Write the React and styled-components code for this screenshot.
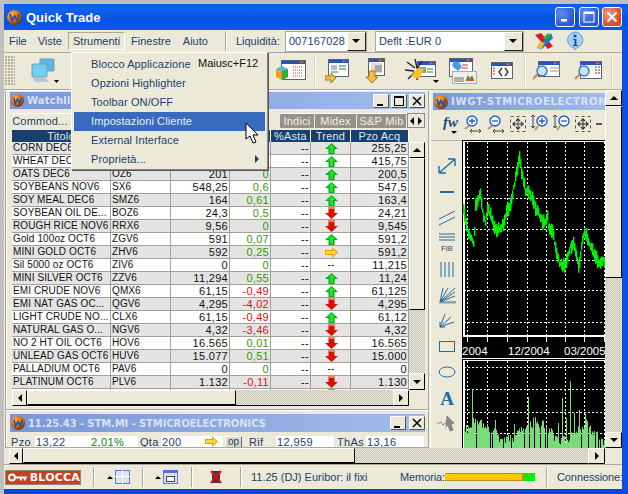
import React from "react";
import styled, { createGlobalStyle } from "styled-components";

const NAVY = "#1b3f6b";
const FACE = "#ece9d8";
const LINE = "#a3a194";
const TOOL = "#1c6ea4";

const ROWS = [
  ["CORN DEC6", "CZ6", "255,5", "0,1", "up", "255,25"],
  ["WHEAT DEC6", "WZ6", "416", "0,1", "up", "415,75"],
  ["OATS DEC6", "OZ6", "201", "0", "up", "200,5"],
  ["SOYBEANS NOV6", "SX6", "548,25", "0,6", "up", "547,5"],
  ["SOY MEAL DEC6", "SMZ6", "164", "0,61", "up", "163,4"],
  ["SOYBEAN OIL DE...", "BOZ6", "24,3", "0,5", "down", "24,21"],
  ["ROUGH RICE NOV6", "RRX6", "9,56", "0", "down", "9,545"],
  ["Gold 100oz OCT6", "ZGV6", "591", "0,07", "up", "591,2"],
  ["MINI GOLD OCT6", "ZHV6", "592", "0,25", "right", "591,2"],
  ["Sil 5000 oz OCT6", "ZIV6", "0", "0", "none", "11,215"],
  ["MINI SILVER OCT6", "ZZV6", "11,294", "0,55", "up", "11,24"],
  ["EMI CRUDE NOV6", "QMX6", "61,15", "-0,49", "up", "61,125"],
  ["EMI NAT GAS OC...", "QGV6", "4,295", "-4,02", "down", "4,295"],
  ["LIGHT CRUDE NO...", "CLX6", "61,15", "-0,49", "up", "61,12"],
  ["NATURAL GAS O...", "NGV6", "4,32", "-3,46", "down", "4,32"],
  ["NO 2 HT OIL OCT6", "HOV6", "16.565", "0,01", "down", "16.565"],
  ["UNLEAD GAS OCT6", "HUV6", "15.077", "0,51", "down", "15.000"],
  ["PALLADIUM OCT6", "PAV6", "0", "0", "none", "0"],
  ["PLATINUM OCT6", "PLV6", "1.132", "-0,11", "down", "1.130"],
  ["", "", "", "", "down", ""],
];

const MENU = [
  { label: "Blocco Applicazione", keys: "Maiusc+F12" },
  { label: "Opzioni Highlighter" },
  { label: "Toolbar ON/OFF" },
  { label: "Impostazioni Cliente", active: true },
  { label: "External Interface" },
  { label: "Proprietà...", sub: true },
];

const PRICE = [
  [463, 210], [465, 223], [467, 230], [470, 237], [473, 243], [474, 230], [475, 207], [477, 203],
  [480, 193], [482, 213], [485, 223], [487, 207], [490, 213], [493, 227], [497, 230], [500, 227],
  [503, 223], [506, 213], [509, 207], [512, 193], [515, 177], [517, 167], [519, 158], [522, 177],
  [525, 190], [528, 190], [533, 203], [538, 213], [542, 222], [547, 218], [548, 227], [552, 233],
  [555, 247], [558, 260], [562, 268], [565, 263], [567, 257], [570, 247], [573, 243], [576, 257],
  [578, 267], [581, 247], [584, 232], [588, 240], [593, 253], [598, 263], [605, 260],
];

const VOLUME_PEAKS = { 472: 59, 473: 30, 495: 28, 514: 24, 528: 51, 532: 20, 558: 25, 562: 50, 566: 30, 570: 67, 574: 35, 579: 38, 585: 34, 593: 13 };
const VOLUME_GAPS = [476, 490, 492, 503, 511, 524, 529, 534, 540, 545, 547, 581, 588, 595, 598, 600];

const priceAt = (x) => {
  for (let i = 1; i < PRICE.length; i++) {
    const [x1, y1] = PRICE[i];
    const [x0, y0] = PRICE[i - 1];
    if (x <= x1) return y0 + ((y1 - y0) * (x - x0)) / (x1 - x0);
  }
  return 260;
};

const noise = (x) => Math.abs(Math.sin(x * 12.9898) * 43758.5453) % 1;

const volumeAt = (x) => {
  if (VOLUME_PEAKS[x]) return VOLUME_PEAKS[x];
  if (VOLUME_GAPS.includes(x)) return 0;
  const wave = 12 + 9 * Math.sin((x - 464) / 9);
  return Math.max(3, wave + noise(x) * 10 - (x > 590 ? 12 : 0));
};

const GlobalStyle = createGlobalStyle`
  html, body {
    margin: 0;
    background: #c0c0c0;
    overflow: hidden;
  }
  * {
    box-sizing: border-box;
  }
`;

const Page = styled.div`
  width: 628px;
  height: 494px;
  padding: 4px 0 0 4px;
  background: #c0c0c0;
  font: 11px "Liberation Sans", Arial, sans-serif;
  color: ${NAVY};
`;

const AppWindow = styled.div`
  position: relative;
  width: 624px;
  height: 490px;
  display: flex;
  flex-direction: column;
  background: ${FACE};
  border-right: 6px solid #0c4fe0;
  border-bottom: 5px solid #0a46d8;
`;

const TitleBar = styled.div`
  height: 26px;
  margin-right: -6px;
  padding: 0 6px 0 3px;
  display: flex;
  align-items: center;
  gap: 3px;
  background: linear-gradient(180deg, #0a5be8 0%, #0f62f0 20%, #0553e0 60%, #0a58ea 100%);
`;

const AppTitle = styled.div`
  flex: 1;
  margin-left: 1px;
  color: #fff;
  font: bold 13px "Liberation Sans", Arial, sans-serif;
`;

const CaptionButton = styled.div`
  width: 20px;
  height: 20px;
  margin-left: ${(p) => p.$gap || 0}px;
  border: 1px solid #fff;
  border-radius: 3px;
  display: flex;
  align-items: center;
  justify-content: center;
  background: ${(p) =>
    p.$close
      ? "radial-gradient(circle at 30% 30%, #ee9a80, #d9492a 70%)"
      : "radial-gradient(circle at 30% 30%, #5f8bf0, #2a55d8 75%)"};
`;

const MenuBar = styled.div`
  height: 23px;
  display: flex;
  align-items: center;
  border-bottom: 1px solid #aca899;
  font-size: 11px;
`;

const MenuTitle = styled.div`
  height: 18px;
  line-height: 16px;
  padding: 0 4px;
  margin-left: ${(p) => p.$ml || 0}px;
  border: 1px solid ${(p) => (p.$open ? "#aca899" : "transparent")};
  border-right-color: ${(p) => (p.$open ? "#fff" : "transparent")};
  border-bottom-color: ${(p) => (p.$open ? "#fff" : "transparent")};
`;

const MenuDivider = styled.div`
  width: 1px;
  height: 20px;
  margin: 0 10px 0 ${(p) => p.$ml || 0}px;
  background: #aca899;
  box-shadow: 1px 0 #fff;
`;

const FieldLabel = styled.div`
  width: 43px;
  flex: none;
`;

const Combo = styled.div`
  width: ${(p) => p.$w}px;
  height: 21px;
  flex: none;
  margin-left: ${(p) => p.$ml || 0}px;
  padding-left: 3px;
  display: flex;
  align-items: center;
  justify-content: space-between;
  background: #fff;
  border: 1px solid #aca899;
  letter-spacing: 0.1px;
`;

const ComboButton = styled.div`
  width: 19px;
  height: 19px;
  display: flex;
  align-items: center;
  justify-content: center;
  background: ${FACE};
  border: 1px solid;
  border-color: #fff #222 #222 #fff;
`;

const Triangle = styled.span`
  width: 0;
  height: 0;
  display: block;
  border-style: solid;
  border-color: transparent;
  ${(p) => p.$dir === "up" && `border-width: 0 ${p.$s || 4}px ${p.$s || 4}px; border-bottom-color: #000;`}
  ${(p) => p.$dir === "down" && `border-width: ${p.$s || 4}px ${p.$s || 4}px 0; border-top-color: #000;`}
  ${(p) => p.$dir === "left" && `border-width: ${p.$s || 4}px ${p.$s || 4}px ${p.$s || 4}px 0; border-right-color: #000;`}
  ${(p) => p.$dir === "right" && `border-width: ${p.$s || 4}px 0 ${p.$s || 4}px ${p.$s || 4}px; border-left-color: #000;`}
`;

const ToolBar = styled.div`
  height: 37px;
  display: flex;
  align-items: center;
  border-bottom: 1px solid #aca899;
`;

const Gripper = styled.div`
  width: 10px;
  height: 30px;
  margin-left: 1px;
  background: radial-gradient(circle at 1px 1px, #b4b0a0 0.8px, transparent 0.8px) 0 0 / 3px 3px;
`;

const ToolSlot = styled.div`
  margin-left: ${(p) => p.$ml}px;
  display: flex;
  align-items: flex-end;
`;

const ToolDivider = styled.div`
  width: 1px;
  height: 30px;
  margin-left: ${(p) => p.$ml}px;
  background: #fff;
  box-shadow: -1px 0 #d8d4c4;
`;

const Workspace = styled.div`
  height: 374px;
  display: grid;
  grid-template-columns: 601px 17px;
  grid-template-rows: 358px 16px;
`;

const Desktop = styled.div`
  display: flex;
  overflow: hidden;
`;

const LeftColumn = styled.div`
  width: 426px;
  flex: none;
  padding-left: 1px;
`;

const ChildFrame = styled.div`
  width: 424px;
  height: ${(p) => p.$h}px;
  padding: ${(p) => p.$pt || 1}px 3px 0 4px;
  border: 1px solid #aca899;
  border-top-color: #fff;
  box-shadow: inset 1px 0 #fff;
  overflow: hidden;
`;

const ChildTitle = styled.div`
  height: ${(p) => p.$h || 17}px;
  padding-left: 1px;
  display: flex;
  align-items: center;
  gap: 3px;
  overflow: hidden;
  white-space: nowrap;
  background: linear-gradient(90deg, #7a97d8 0%, #a0bcec 100%);
`;

const ChildCaption = styled.div`
  flex: 1;
  color: #d6e2f6;
  font: bold 10px "DejaVu Sans", sans-serif;
  letter-spacing: ${(p) => p.$ls || 0}px;
`;

const ChildButton = styled.div`
  width: 16px;
  height: 14px;
  margin-left: ${(p) => p.$ml || 0}px;
  display: flex;
  align-items: center;
  justify-content: center;
  background: ${FACE};
  border: 1px solid;
  border-color: #fff #555 #555 #fff;
`;

const Tabs = styled.div`
  height: 15px;
  margin-top: 4px;
  display: flex;
  justify-content: space-between;
  align-items: stretch;
`;

const Tab = styled.div`
  width: ${(p) => p.$w}px;
  padding-top: 1px;
  margin-right: 1px;
  text-align: center;
  font-size: 11px;
  letter-spacing: 0.2px;
  line-height: 13px;
  white-space: nowrap;
  color: ${(p) => (p.$active ? NAVY : "#f0efe8")};
  background: ${(p) => (p.$active ? FACE : "#94928a")};
  border-top: 1px solid #fff;
`;

const TabGroup = styled.div`
  display: flex;
`;

const TabArrows = styled.div`
  width: 18px;
  display: flex;
  align-items: center;
  justify-content: space-around;
  background: ${FACE};
  border: 1px solid #888;
`;

const GridHead = styled.div`
  display: grid;
  grid-template-columns: 99px 60px 59px 41px 40px 40px 58px;
  width: 397px;
  height: 12px;
  margin: 2px 0 0 2px;
  background: #17406e;
`;

const HeadCell = styled.div`
  color: #dce8f4;
  text-align: center;
  line-height: 12px;
  font-size: 11px;
  border-right: 1px solid #fff;
  letter-spacing: 0.2px;
`;

const GridBody = styled.div`
  display: flex;
  height: 248px;
  margin-left: 2px;
`;

const Rows = styled.div`
  width: 397px;
  overflow: hidden;
`;

const Row = styled.div`
  display: grid;
  grid-template-columns: 99px 60px 59px 41px 40px 40px 58px;
  height: 13px;
  background: ${(p) => (p.$odd ? "#fff" : "#e4e4e4")};
  border-bottom: 1px solid ${LINE};
`;

const Cell = styled.div`
  padding: 0 ${(p) => (p.$right ? 1 : 0)}px 0 ${(p) => (p.$right ? 0 : 1)}px;
  height: 12px;
  line-height: 12px;
  font-size: ${(p) => (p.$right ? 11 : 10)}px;
  letter-spacing: ${(p) => (p.$right ? 0.3 : 0.1)}px;
  color: ${(p) => p.$color || "#111"};
  text-align: ${(p) => (p.$right ? "right" : "left")};
  white-space: nowrap;
  overflow: hidden;
  border-right: 1px solid ${LINE};
  display: ${(p) => (p.$center ? "flex" : "block")};
  align-items: center;
  justify-content: center;
`;

const VScroll = styled.div`
  width: ${(p) => p.$w || 16}px;
  display: flex;
  flex-direction: column;
  background: repeating-conic-gradient(${FACE} 0 25%, #c4c2b6 0 50%) 0 0 / 2px 2px;
`;

const ScrollButton = styled.div`
  width: ${(p) => p.$w || 16}px;
  height: ${(p) => p.$h || 16}px;
  flex: none;
  margin-top: ${(p) => (p.$end ? "auto" : 0)};
  margin-left: ${(p) => (p.$endX ? "auto" : 0)};
  display: flex;
  align-items: center;
  justify-content: center;
  background: ${FACE};
  border: 1px solid;
  border-color: #fff #000 #000 #fff;
`;

const VThumb = styled.div`
  height: ${(p) => p.$h}px;
  flex: none;
  background: ${FACE};
  border: 1px solid;
  border-color: #fff #000 #000 #fff;
`;

const HScroll = styled.div`
  height: 16px;
  margin-left: ${(p) => p.$ml || 0}px;
  width: ${(p) => p.$w}px;
  display: flex;
  background: repeating-conic-gradient(${FACE} 0 25%, #c4c2b6 0 50%) 0 0 / 2px 2px;
  border-bottom: 1px solid #000;
`;

const HThumb = styled.div`
  width: ${(p) => p.$w}px;
  flex: none;
  background: ${FACE};
  border: 1px solid;
  border-color: #fff #000 #000 #fff;
`;

const QuoteRow = styled.div`
  height: 13px;
  margin-top: 3px;
  display: flex;
  align-items: center;
  font-size: 11px;
`;

const QuoteLabel = styled.div`
  width: ${(p) => p.$w}px;
  padding-left: ${(p) => p.$pl || 0}px;
  flex: none;
  letter-spacing: 0.3px;
`;

const QuoteValue = styled.div`
  width: ${(p) => p.$w}px;
  height: 12px;
  line-height: 12px;
  padding-left: 1px;
  flex: none;
  background: #fff;
  letter-spacing: 0.4px;
  color: ${(p) => p.$color || NAVY};
`;

const OpButton = styled.div`
  width: 17px;
  height: 12px;
  margin: 0 0 0 2px;
  flex: none;
  font-size: 10px;
  line-height: 9px;
  text-align: center;
  background: #dcd9ca;
  border: 1px solid;
  border-color: #fff #666 #666 #fff;
`;

const ChartWindow = styled.div`
  flex: 1;
  min-width: 0;
  padding: 3px 0 0 2px;
  border-left: 1px solid #fff;
  display: flex;
  flex-direction: column;
`;

const ChartTools = styled.div`
  height: 24px;
  margin: 2px 0 4px;
  padding-left: 10px;
  display: flex;
  align-items: center;
  gap: 5px;
  overflow: hidden;
`;

const ToolDash = styled.div`
  width: 6px;
  height: 2px;
  flex: none;
  background: #555;
`;

const ChartBody = styled.div`
  flex: 1;
  display: flex;
  min-height: 0;
  margin-left: -2px;
`;

const DrawTools = styled.div`
  width: 31px;
  flex: none;
  padding-top: 15px;
  display: flex;
  flex-direction: column;
  align-items: center;
  gap: 5.8px;
  border-top: 1px solid #b8b6a8;
`;

const ChartCanvas = styled.svg`
  width: 143px;
  height: 308px;
  display: block;
  background: #000;
`;

const ChartLabel = styled.text`
  fill: #fff;
  font: 11.5px "Liberation Sans", Arial, sans-serif;
`;

const Corner = styled.div`
  background: ${FACE};
`;

const OuterHScroll = styled(HScroll)`
  padding-left: 5px;
  background: none;
  border: 0;
`;

const OuterTrack = styled.div`
  flex: 1;
  display: flex;
  background: repeating-conic-gradient(${FACE} 0 25%, #c4c2b6 0 50%) 0 0 / 2px 2px;
  border-bottom: 1px solid #000;
`;

const StatusBar = styled.div`
  height: 25px;
  display: flex;
  align-items: center;
  padding-left: 1px;
  border-top: 1px solid #aca899;
  font-size: 11px;
  white-space: nowrap;
`;

const LockButton = styled.div`
  width: 76px;
  height: 15px;
  padding-left: 2px;
  display: flex;
  align-items: center;
  gap: 3px;
  color: #fff;
  font: bold 11px "DejaVu Sans", sans-serif;
  letter-spacing: 0.2px;
  background: #c8401c;
  border: 1px solid #8a8878;
`;

const StatusDivider = styled.div`
  width: 1px;
  height: 20px;
  flex: none;
  margin-left: ${(p) => p.$ml}px;
  background: #aca899;
  box-shadow: 1px 0 #fff;
`;

const StatusIcon = styled.div`
  margin-left: ${(p) => p.$ml}px;
  display: flex;
  align-items: center;
  gap: 2px;
`;

const StatusText = styled.div`
  width: ${(p) => (p.$w ? `${p.$w}px` : "auto")};
  flex: none;
  margin-left: ${(p) => p.$ml}px;
  letter-spacing: ${(p) => p.$ls || 0}px;
`;

const MemoryBar = styled.div`
  width: 90px;
  height: 8px;
  flex: none;
  display: flex;
  background: #ffc800;
  box-shadow: inset 0 -1px #b89020, inset 0 1px #b89020;
`;

const MemoryFree = styled.div`
  width: ${(p) => p.$w}px;
  margin-left: auto;
  background: #00f000;
  border-left: 2px solid #b89020;
`;

const MenuPanel = styled.div`
  position: absolute;
  left: 67px;
  top: 48px;
  width: 197px;
  height: 118px;
  padding: 2px;
  background: ${FACE};
  border: 1px solid;
  border-color: #fff #888 #888 #fff;
  box-shadow: 1px 1px 0 #555;
  z-index: 5;
`;

const MenuItem = styled.div`
  position: relative;
  height: 19px;
  line-height: 19px;
  padding-left: 17px;
  font-size: 11px;
  letter-spacing: 0.1px;
  color: ${(p) => (p.$active ? "#e8eef8" : NAVY)};
  background: ${(p) => (p.$active ? "#386bc0" : "transparent")};
  display: flex;
`;

const MenuKeys = styled.div`
  position: absolute;
  left: 124px;
  top: -1px;
  color: #111;
  letter-spacing: 0;
`;

const SubArrow = styled.span`
  position: absolute;
  right: 6px;
  top: 5px;
  width: 0;
  height: 0;
  border-style: solid;
  border-width: 4px 0 4px 4px;
  border-color: transparent transparent transparent ${NAVY};
`;

const Cursor = styled.svg`
  position: absolute;
  left: 241px;
  top: 118px;
  z-index: 6;
`;

const Logo = ({ size = 14 }) => (
  <svg width={size} height={size} viewBox="0 0 14 14" style={{ flex: "none" }}>
    <defs>
      <radialGradient id="logoBall" cx="35%" cy="30%" r="75%">
        <stop offset="0" stopColor="#ffb040" />
        <stop offset="0.6" stopColor="#d86a10" />
        <stop offset="1" stopColor="#5a3010" />
      </radialGradient>
    </defs>
    <circle cx="7" cy="7" r="7" fill="url(#logoBall)" />
    <path d="M3 4l1.6 6 2.4-4.5L9.4 10 11 4" fill="none" stroke="#2050a8" strokeWidth="1.6" />
  </svg>
);

const Trend = ({ kind }) => {
  if (kind === "none") return <span>--</span>;
  if (kind === "up")
    return (
      <svg width="13" height="11" viewBox="0 0 13 11">
        <path d="M6.5 0L13 6H9.5V11H3.5V6H0z" fill="#00b010" />
        <path d="M6.5 1L3 5H5V10H8V5H10z" fill="#28e030" />
      </svg>
    );
  if (kind === "down")
    return (
      <svg width="13" height="12" viewBox="0 0 13 12">
        <path d="M3.5 0H9.5V6H13L6.5 12 0 6H3.5z" fill="#d81000" />
        <path d="M3.5 0H9.5V2H3.5z" fill="#f08060" />
      </svg>
    );
  return (
    <svg width="13" height="11" viewBox="0 0 13 11">
      <path d="M0 3H7V0L13 5.5 7 11V8H0z" fill="#e8a000" />
      <path d="M1 4H8V2L11.5 5.5 8 9V7H1z" fill="#ffd840" />
    </svg>
  );
};

// small application window, the base of most toolbar icons
const WinIcon = ({ x = 0, y = 0, w = 22, h = 17, children }) => (
  <g transform={`translate(${x} ${y})`}>
    <rect x="0.5" y="0.5" width={w} height={h} fill="#fff" stroke="#5a6470" />
    <rect x="1" y="1" width={w - 1} height="3" fill="#2850c8" />
    <rect x={w - 5} y="1.5" width="1.5" height="1.5" fill="#e8a020" />
    <rect x={w - 2.5} y="1.5" width="1.5" height="1.5" fill="#e04020" />
    {children}
  </g>
);

const SideArrow = () => <path d="M0 18h6v-3l5 5-5 5v-3H0z" fill="#f0c040" stroke="#a07820" />;
const DownArrow = () => <path d="M4 13h6v6h3l-6 6-6-6h3z" fill="#f0c040" stroke="#a07820" />;

const Magnifier = ({ x, y }) => (
  <g transform={`translate(${x} ${y})`}>
    <path d="M6 6L0 12" stroke="#c89060" strokeWidth="2.4" />
    <circle cx="9" cy="4" r="5" fill="#c8e4fa" stroke="#3878b8" strokeWidth="1.4" />
  </g>
);

const ToolbarIcon = ({ name }) => {
  switch (name) {
    case "network":
      return (
        <svg width="28" height="26" viewBox="0 0 28 26">
          <rect x="9" y="1" width="14" height="12" rx="1" fill="#58b8ee" stroke="#8098b0" />
          <rect x="1" y="6" width="15" height="13" rx="1" fill="#70d0f4" stroke="#8098b0" />
          <path d="M2 20h13l3 4H3z" fill="#c0c4d8" />
          <path d="M23 22h5l-2.5 3z" fill="#000" />
        </svg>
      );
    case "cube":
      return (
        <svg width="30" height="22" viewBox="0 0 30 22">
          <WinIcon x="5" w="24" h="19">
            <path d="M12 7h10M12 10h10M12 13h10M12 16h10" stroke="#c04040" strokeDasharray="1 1" />
          </WinIcon>
          <path d="M0 9l6-3 6 3v8l-6 3-6-3z" fill="#f0a020" />
          <path d="M6 11l6-2v8l-6 3z" fill="#30b030" />
          <path d="M0 9l6-3 6 3-6 2z" fill="#58b8e8" />
        </svg>
      );
    case "exportWin":
      return (
        <svg width="24" height="26" viewBox="0 0 24 26">
          <WinIcon x="3" y="1" w="20" h="17">
            <rect x="3" y="6" width="6" height="5" fill="#bbb" />
            <path d="M3 13h7M11 7h7M11 10h7" stroke="#188030" />
          </WinIcon>
          <SideArrow />
        </svg>
      );
    case "importWin":
      return (
        <svg width="20" height="26" viewBox="0 0 20 26">
          <WinIcon x="3" y="0" w="16" h="17">
            <rect x="3" y="5" width="11" height="10" fill="#ead8d8" />
            <rect x="7" y="7" width="7" height="7" fill="#a8a8a8" />
          </WinIcon>
          <DownArrow />
        </svg>
      );
    case "spark":
      return (
        <svg width="34" height="26" viewBox="0 0 34 26">
          <WinIcon x="12" y="3" w="18" h="15">
            <rect x="2" y="6" width="7" height="6" fill="#999" />
            <path d="M10 8h6M10 11h6" stroke="#188030" />
          </WinIcon>
          <path d="M2 4l8 6M10 1l2 9M17 3l-5 8M0 12l9 1M3 21l7-7M12 22l1-9" stroke="#222" strokeWidth="1.4" />
          <path d="M6 18l7-8 6 1-5 10z" fill="#f4c420" />
          <path d="M28 22h6l-3 3z" fill="#000" />
        </svg>
      );
    case "chartWin":
      return (
        <svg width="28" height="26" viewBox="0 0 28 26">
          <WinIcon x="0" y="0" w="23" h="18">
            <path d="M3 7h6M13 7h6M13 10h6" stroke="#c04040" />
          </WinIcon>
          <path d="M4 3l6 1 3 5-4 4-5-4z" fill="#48a0e0" />
          <rect x="3.5" y="13.5" width="24" height="12" fill="#eee" stroke="#aaa" />
          <rect x="5" y="19" width="10" height="5" fill="#b0b0b0" />
          <path d="M17 23l2-5 2 3 2-3 2 5" fill="#e05020" stroke="#30a040" />
        </svg>
      );
    case "codeWin":
      return (
        <svg width="22" height="18" viewBox="0 0 22 18">
          <WinIcon w="21" h="16">
            <path d="M2 6h2M2 9h2M2 12h2" stroke="#c08020" strokeWidth="1.4" />
            <path d="M11 6l-3 4 3 4M14 6l3 4-3 4" fill="none" stroke="#333" strokeWidth="1.4" />
          </WinIcon>
        </svg>
      );
    case "searchWin":
      return (
        <svg width="27" height="21" viewBox="0 0 27 21">
          <WinIcon x="5" y="0" w="21" h="15">
            <path d="M12 7h11M12 10h11" stroke="#999" />
          </WinIcon>
          <Magnifier x="0" y="6" />
        </svg>
      );
    case "searchList":
      return (
        <svg width="27" height="21" viewBox="0 0 27 21">
          <WinIcon x="5" y="0" w="21" h="17">
            <path d="M15 6h8M15 9h8M15 12h8" stroke="#444" strokeDasharray="2 1" />
          </WinIcon>
          <Magnifier x="0" y="6" />
        </svg>
      );
    default:
      return null;
  }
};

const ZoomIcon = ({ minus }) => (
  <svg width="18" height="20" viewBox="0 0 18 20" style={{ flex: "none" }}>
    <path d="M5 12L1 15" stroke="#c89060" strokeWidth="2" />
    <circle cx="8" cy="7" r="5" fill="#fff" stroke="#2060c0" strokeWidth="1.4" />
    <path d={minus ? "M5 7h6" : "M5 7h6M8 4v6"} stroke="#2060c0" strokeWidth="1.3" />
    <path d="M6 17h11M6 17l2-2M6 17l2 2M17 17l-2-2M17 17l-2 2" stroke="#444" fill="none" />
  </svg>
);

const ZoomYIcon = ({ minus }) => (
  <svg width="17" height="20" viewBox="0 0 17 20" style={{ flex: "none" }}>
    <path d="M2 1v13M2 1L0 3M2 1l2 2M2 14L0 12M2 14l2-2" stroke="#444" fill="none" />
    <path d="M7 12l-3 4" stroke="#c89060" strokeWidth="2" />
    <circle cx="11" cy="7" r="5" fill="#fff" stroke="#2060c0" strokeWidth="1.4" />
    <path d={minus ? "M8 7h6" : "M8 7h6M11 4v6"} stroke="#2060c0" strokeWidth="1.3" />
  </svg>
);

const FitIcon = ({ inward }) => (
  <svg width="16" height="16" viewBox="0 0 16 16" style={{ flex: "none" }}>
    <rect x="0.5" y="0.5" width="15" height="15" fill="none" stroke="#555" strokeDasharray="3 3" />
    <path d="M8 3v10M3 8h10" stroke={inward ? "#222" : "#444"} />
    <path d="M6 5l2-2 2 2M6 11l2 2 2-2M5 6L3 8l2 2M11 6l2 2-2 2" fill="none" stroke="#333" strokeWidth="1.3" />
  </svg>
);

const DrawTool = ({ name }) => {
  const common = { width: 22, height: 20, viewBox: "0 0 22 20", fill: "none", stroke: TOOL };
  switch (name) {
    case "line":
      return (
        <svg {...common} strokeWidth="1.4">
          <path d="M3 17L19 3M19 3h-7M19 3v7M3 17h7M3 17v-7" />
        </svg>
      );
    case "dash":
      return (
        <svg {...common} strokeWidth="2">
          <path d="M4 10h14" />
        </svg>
      );
    case "parallel":
      return (
        <svg {...common}>
          <path d="M3 11L19 3M3 17L19 9" />
        </svg>
      );
    case "fib":
      return (
        <svg {...common}>
          <path d="M3 1h16M3 4h16M3 7h16" />
          <text x="11" y="18" textAnchor="middle" fontSize="7.5" fontFamily="Liberation Sans" fill="#444" stroke="none">
            FIB
          </text>
        </svg>
      );
    case "vlines":
      return (
        <svg {...common}>
          <path d="M5 3v15M9 3v15M13 3v15M17 3v15" />
        </svg>
      );
    case "fan":
      return (
        <svg {...common}>
          <path d="M4 17L19 3M4 17L19 7M4 17L19 11M4 17L12 3M4 17L7 3M4 17h16" />
          <path d="M3 18h17" stroke="#999" />
        </svg>
      );
    case "speed":
      return (
        <svg {...common}>
          <path d="M4 16L18 11M4 16L15 6M4 16L9 3M4 16h5M4 16v-5" />
        </svg>
      );
    case "rect":
      return (
        <svg {...common}>
          <rect x="3.5" y="4.5" width="15" height="10" />
        </svg>
      );
    case "ellipse":
      return (
        <svg {...common}>
          <ellipse cx="11" cy="10" rx="8" ry="5" />
        </svg>
      );
    case "text":
      return (
        <svg {...common} stroke="none">
          <text x="11" y="17" textAnchor="middle" fontSize="19" fontWeight="bold" fontFamily="Liberation Serif" fill={TOOL}>
            A
          </text>
        </svg>
      );
    default:
      return (
        <svg {...common} stroke="#888">
          <path d="M1 10l4-2 2 3 4-3" />
          <path d="M11 2l7 7-3 1 2 6-3 1-2-6-2 2z" fill="#888" />
        </svg>
      );
  }
};

const PriceChart = () => {
  const columns = Array.from({ length: 143 }, (_, i) => i + 462);
  const gridX = [467, 487, 507, 527, 546, 565, 584, 604];
  const priceY = [167, 198, 229, 260, 290, 322];
  const volumeY = [367, 389, 412, 433];
  return (
    <ChartCanvas viewBox="462 140 143 308">
      <g stroke="#fff" strokeDasharray="2 2" shapeRendering="crispEdges">
        {gridX.map((x) => (
          <React.Fragment key={x}>
            <line x1={x + 0.5} x2={x + 0.5} y1="142" y2="336" />
            <line x1={x + 0.5} x2={x + 0.5} y1="361" y2="448" />
          </React.Fragment>
        ))}
        {priceY.map((y) => (
          <line key={y} x1="464" x2="605" y1={y + 0.5} y2={y + 0.5} />
        ))}
        {volumeY.map((y) => (
          <line key={y} x1="464" x2="605" y1={y + 0.5} y2={y + 0.5} />
        ))}
      </g>
      <g fill="none" stroke="#fff" shapeRendering="crispEdges">
        <path d="M605 141.5H464V336H605" strokeWidth="1.5" />
        <path d="M605 360.5H464V448" strokeWidth="1.5" />
        <path d="M462 358.5H605" />
        {gridX.map((x) => (
          <line key={x} x1={x + 0.5} x2={x + 0.5} y1="336" y2="342" strokeWidth="1.2" />
        ))}
      </g>
      {columns.slice(1).map((x) => {
        const mid = priceAt(x) + (noise(x + 7) - 0.5) * 5;
        const size = 4 + noise(x) * 10;
        return <rect key={x} x={x} y={mid - size / 2} width="1.4" height={size} fill="#00f000" />;
      })}
      {columns.slice(2).map((x) => {
        const h = volumeAt(x);
        return <rect key={x} x={x} y={448 - h} width="1" height={h} fill="#78dc78" />;
      })}
      <ChartLabel x="462" y="355">2004</ChartLabel>
      <ChartLabel x="508" y="355">12/2004</ChartLabel>
      <ChartLabel x="564" y="355">03/2005</ChartLabel>
    </ChartCanvas>
  );
};

const App = () => {
  return (
    <Page>
      <GlobalStyle />
      <AppWindow>
        <TitleBar>
          <Logo size={15} />
          <AppTitle>Quick Trade</AppTitle>
          <CaptionButton>
            <svg width="10" height="10" viewBox="0 0 10 10">
              <rect x="1" y="7" width="6" height="2.5" fill="#fff" />
            </svg>
          </CaptionButton>
          <CaptionButton $gap={1}>
            <svg width="12" height="12" viewBox="0 0 12 12">
              <rect x="1" y="1" width="10" height="10" fill="none" stroke="#fff" />
              <rect x="1" y="1" width="10" height="2" fill="#fff" />
            </svg>
          </CaptionButton>
          <CaptionButton $close>
            <svg width="12" height="12" viewBox="0 0 12 12">
              <path d="M1.5 1.5l9 9M10.5 1.5l-9 9" stroke="#fff" strokeWidth="2" />
            </svg>
          </CaptionButton>
        </TitleBar>

        <MenuBar>
          <MenuTitle>File</MenuTitle>
          <MenuTitle $ml={1}>Viste</MenuTitle>
          <MenuTitle $ml={1} $open>Strumenti</MenuTitle>
          <MenuTitle $ml={1}>Finestre</MenuTitle>
          <MenuTitle $ml={2}>Aiuto</MenuTitle>
          <MenuDivider $ml={12} />
          <FieldLabel>Liquidità:</FieldLabel>
          <Combo $w={82} $ml={6}>
            007167028
            <ComboButton>
              <Triangle $dir="down" />
            </ComboButton>
          </Combo>
          <Combo $w={149} $ml={8}>
            Deflt :EUR 0
            <ComboButton>
              <Triangle $dir="down" />
            </ComboButton>
          </Combo>
          <svg width="20" height="18" viewBox="0 0 20 18" style={{ marginLeft: 10 }}>
            <path d="M1 3l6-2 12 13-5 3z" fill="#e01818" />
            <path d="M3 16L17 1l2 5L8 17z" fill="#1878d8" />
            <path d="M9 6l5-5 3 3-5 4z" fill="#28b030" />
            <path d="M6 10l5 1-4 6-4-2z" fill="#f0c020" />
          </svg>
          <svg width="20" height="20" viewBox="0 0 20 20" style={{ marginLeft: 11 }}>
            <path d="M10 1a8 8 0 0 1 2 15.7L10 19l-1-2.2A8 8 0 0 1 10 1z" fill="#a8d0f4" stroke="#7098c8" />
            <circle cx="10" cy="5" r="1.6" fill="#1850a0" />
            <path d="M8 8h3.4v6H13v1H8v-1h1.4V9H8z" fill="#1850a0" />
          </svg>
        </MenuBar>

        <ToolBar>
          <Gripper />
          <ToolSlot $ml={16}>
            <ToolbarIcon name="network" />
          </ToolSlot>
          <ToolSlot $ml={217}>
            <ToolbarIcon name="cube" />
          </ToolSlot>
          <ToolDivider $ml={9} />
          <ToolSlot $ml={9}>
            <ToolbarIcon name="exportWin" />
          </ToolSlot>
          <ToolSlot $ml={16}>
            <ToolbarIcon name="importWin" />
          </ToolSlot>
          <ToolSlot $ml={20}>
            <ToolbarIcon name="spark" />
          </ToolSlot>
          <ToolSlot $ml={10}>
            <ToolbarIcon name="chartWin" />
          </ToolSlot>
          <ToolSlot $ml={14}>
            <ToolbarIcon name="codeWin" />
          </ToolSlot>
          <ToolDivider $ml={12} />
          <ToolSlot $ml={7}>
            <ToolbarIcon name="searchWin" />
          </ToolSlot>
          <ToolSlot $ml={15}>
            <ToolbarIcon name="searchList" />
          </ToolSlot>
          <ToolDivider $ml={10} />
        </ToolBar>

        <Workspace>
          <Desktop>
            <LeftColumn>
              <ChildFrame $h={320}>
                <ChildTitle>
                  <Logo size={13} />
                  <ChildCaption $ls={0.2}>Watchlist</ChildCaption>
                  <ChildButton>
                    <svg width="10" height="10" viewBox="0 0 10 10">
                      <rect x="1" y="8" width="6" height="2" fill="#000" />
                    </svg>
                  </ChildButton>
                  <ChildButton $ml={-1}>
                    <svg width="10" height="10" viewBox="0 0 10 10">
                      <rect x="0.5" y="0.5" width="9" height="9" fill="none" stroke="#000" />
                      <rect x="0" y="0" width="10" height="2" fill="#000" />
                    </svg>
                  </ChildButton>
                  <ChildButton $ml={-1}>
                    <svg width="10" height="10" viewBox="0 0 10 10">
                      <path d="M1 1l8 8M9 1l-8 8" stroke="#000" strokeWidth="1.5" />
                    </svg>
                  </ChildButton>
                </ChildTitle>
                <Tabs>
                  <TabGroup>
                    <Tab $active $w={60}>Commod...</Tab>
                  </TabGroup>
                  <TabGroup>
                    <Tab $w={34}>Indici</Tab>
                    <Tab $w={41}>Midex</Tab>
                    <Tab $w={49}>S&amp;P Mib</Tab>
                    <TabArrows>
                      <Triangle $dir="left" />
                      <Triangle $dir="right" />
                    </TabArrows>
                  </TabGroup>
                </Tabs>
                <GridHead>
                  {["Titolo", "Codice", "Ultimo", "%", "%Asta", "Trend", "Pzo Acq"].map((h) => (
                    <HeadCell key={h}>{h}</HeadCell>
                  ))}
                </GridHead>
                <GridBody>
                  <Rows>
                    {ROWS.map((r, i) => (
                      <Row key={i} $odd={i % 2 === 1}>
                        <Cell>{r[0]}</Cell>
                        <Cell>{r[1]}</Cell>
                        <Cell $right>{r[2]}</Cell>
                        <Cell $right $color={r[3].startsWith("-") ? "#e01010" : "#2f9e00"}>
                          {r[3]}
                        </Cell>
                        <Cell $right>--</Cell>
                        <Cell $center>
                          <Trend kind={r[4]} />
                        </Cell>
                        <Cell $right>{r[5]}</Cell>
                      </Row>
                    ))}
                  </Rows>
                  <VScroll>
                    <ScrollButton>
                      <Triangle $dir="up" />
                    </ScrollButton>
                    <VThumb $h={152} />
                    <ScrollButton $end $h={17}>
                      <Triangle $dir="down" />
                    </ScrollButton>
                  </VScroll>
                </GridBody>
                <HScroll $w={397} $ml={2}>
                  <ScrollButton $w={15}>
                    <Triangle $dir="left" />
                  </ScrollButton>
                  <HThumb $w={209} />
                  <ScrollButton $endX>
                    <Triangle $dir="right" />
                  </ScrollButton>
                </HScroll>
              </ChildFrame>

              <ChildFrame $h={38} $pt={3}>
                <ChildTitle $h={18}>
                  <Logo size={14} />
                  <ChildCaption $ls={-0.1}>11.25.43 - STM.MI - STMICROELECTRONICS</ChildCaption>
                  <ChildButton>
                    <svg width="10" height="10" viewBox="0 0 10 10">
                      <rect x="1" y="8" width="6" height="2" fill="#000" />
                    </svg>
                  </ChildButton>
                  <ChildButton>
                    <svg width="10" height="10" viewBox="0 0 10 10">
                      <path d="M1 1l8 8M9 1l-8 8" stroke="#000" strokeWidth="1.5" />
                    </svg>
                  </ChildButton>
                </ChildTitle>
                <QuoteRow>
                  <QuoteLabel $w={25} $pl={1}>Pzo</QuoteLabel>
                  <QuoteValue $w={55}>13,22</QuoteValue>
                  <QuoteValue $w={48} $color="#008a00">2,01%</QuoteValue>
                  <QuoteLabel $w={23} $pl={2}>Qta</QuoteLabel>
                  <QuoteValue $w={43}>200</QuoteValue>
                  <QuoteValue $w={19}>
                    <Trend kind="right" />
                  </QuoteValue>
                  <OpButton>op</OpButton>
                  <QuoteLabel $w={34} $pl={7}>Rif</QuoteLabel>
                  <QuoteValue $w={58}>12,959</QuoteValue>
                  <QuoteLabel $w={32} $pl={3}>ThAs</QuoteLabel>
                  <QuoteValue $w={58}>13,16</QuoteValue>
                </QuoteRow>
              </ChildFrame>
            </LeftColumn>

            <ChartWindow>
              <ChildTitle>
                <Logo size={14} />
                <ChildCaption $ls={0.7}>IWGT-STMICROELECTRONICS</ChildCaption>
              </ChildTitle>
              <ChartTools>
                <svg width="16" height="22" viewBox="0 0 16 22" style={{ flex: "none" }}>
                  <text x="0" y="14" fontFamily="Liberation Serif" fontStyle="italic" fontWeight="bold" fontSize="15" fill="#1c4a80">
                    fw
                  </text>
                  <path d="M8 18h6l-3 3z" fill="#000" />
                </svg>
                <ZoomIcon />
                <ZoomIcon minus />
                <FitIcon />
                <ZoomYIcon />
                <ZoomYIcon minus />
                <FitIcon inward />
                <ToolDash />
              </ChartTools>
              <ChartBody>
                <DrawTools>
                  {["line", "dash", "parallel", "fib", "vlines", "fan", "speed", "rect", "ellipse", "text", "cursor"].map((t) => (
                    <DrawTool key={t} name={t} />
                  ))}
                </DrawTools>
                <PriceChart />
              </ChartBody>
            </ChartWindow>
          </Desktop>

          <VScroll $w={17}>
            <ScrollButton $w={17}>
              <Triangle $dir="up" />
            </ScrollButton>
            <VThumb $h={172} />
            <ScrollButton $w={17} $end>
              <Triangle $dir="down" />
            </ScrollButton>
          </VScroll>

          <OuterHScroll $w={601}>
            <OuterTrack>
              <ScrollButton $w={14}>
                <Triangle $dir="left" />
              </ScrollButton>
              <HThumb $w={332} />
              <ScrollButton $w={17} $endX>
                <Triangle $dir="right" />
              </ScrollButton>
            </OuterTrack>
          </OuterHScroll>
          <Corner />
        </Workspace>

        <StatusBar>
          <LockButton>
            <svg width="19" height="9" viewBox="0 0 19 9">
              <circle cx="4" cy="4.5" r="3" fill="none" stroke="#fff" strokeWidth="2" />
              <path d="M7 3.5h12v2h-1v2h-2v-2h-2v2h-2v-2H7z" fill="#fff" />
            </svg>
            BLOCCA
          </LockButton>
          <StatusDivider $ml={12} />
          <StatusIcon $ml={13}>
            <Triangle $dir="up" $s={3} />
            <svg width="15" height="14" viewBox="0 0 15 14">
              <rect x="0.5" y="0.5" width="14" height="13" fill="#d8e4f4" stroke="#5a80c0" />
              <path d="M7.5 0v14M0 6.5h15" stroke="#fff" />
            </svg>
          </StatusIcon>
          <StatusDivider $ml={12} />
          <StatusIcon $ml={12}>
            <Triangle $dir="up" $s={3} />
            <svg width="15" height="14" viewBox="0 0 15 14">
              <rect x="0.5" y="0.5" width="14" height="13" fill="#d8e4f4" stroke="#5a80c0" />
              <rect x="0" y="0" width="15" height="3" fill="#5a70c8" />
              <rect x="3.5" y="6.5" width="8" height="5" fill="#fff" stroke="#445" />
            </svg>
          </StatusIcon>
          <StatusDivider $ml={13} />
          <StatusIcon $ml={18}>
            <svg width="12" height="14" viewBox="0 0 12 14">
              <rect x="2" y="1" width="8" height="12" fill="#3a3a50" />
              <path d="M1 1l10 12M11 1L1 13" stroke="#e01010" strokeWidth="2" />
            </svg>
          </StatusIcon>
          <StatusDivider $ml={18} />
          <StatusText $ml={10} $w={116}>11.25 (DJ) Euribor: il fixi</StatusText>
          <StatusText $ml={33} $w={45} $ls={-0.1}>Memoria:</StatusText>
          <MemoryBar>
            <MemoryFree $w={13} />
          </MemoryBar>
          <StatusDivider $ml={11} />
          <StatusText $ml={10} $ls={-0.1}>Connessione:</StatusText>
        </StatusBar>

        <MenuPanel>
          {MENU.map((m) => (
            <MenuItem key={m.label} $active={m.active}>
              {m.label}
              {m.keys && <MenuKeys>{m.keys}</MenuKeys>}
              {m.sub && <SubArrow />}
            </MenuItem>
          ))}
        </MenuPanel>
        <Cursor width="13" height="22" viewBox="0 0 13 22">
          <path d="M1 1v16l4-3 3 7 3-1-3-7h5z" fill="#fff" stroke="#000" />
        </Cursor>
      </AppWindow>
    </Page>
  );
};

export default App;
